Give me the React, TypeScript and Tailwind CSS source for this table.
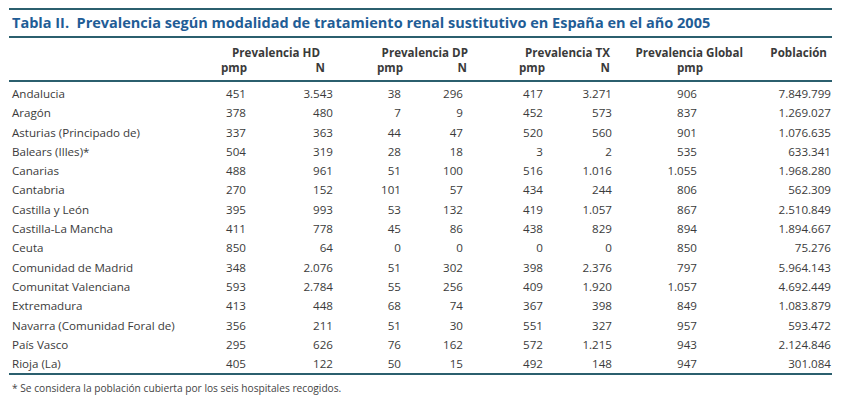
const rows: [string, string, string, string, string, string, string, string, string][] = [
  ['Andalucia', '451', '3.543', '38', '296', '417', '3.271', '906', '7.849.799'],
  ['Aragón', '378', '480', '7', '9', '452', '573', '837', '1.269.027'],
  ['Asturias (Principado de)', '337', '363', '44', '47', '520', '560', '901', '1.076.635'],
  ['Balears (Illes)*', '504', '319', '28', '18', '3', '2', '535', '633.341'],
  ['Canarias', '488', '961', '51', '100', '516', '1.016', '1.055', '1.968.280'],
  ['Cantabria', '270', '152', '101', '57', '434', '244', '806', '562.309'],
  ['Castilla y León', '395', '993', '53', '132', '419', '1.057', '867', '2.510.849'],
  ['Castilla-La Mancha', '411', '778', '45', '86', '438', '829', '894', '1.894.667'],
  ['Ceuta', '850', '64', '0', '0', '0', '0', '850', '75.276'],
  ['Comunidad de Madrid', '348', '2.076', '51', '302', '398', '2.376', '797', '5.964.143'],
  ['Comunitat Valenciana', '593', '2.784', '55', '256', '409', '1.920', '1.057', '4.692.449'],
  ['Extremadura', '413', '448', '68', '74', '367', '398', '849', '1.083.879'],
  ['Navarra (Comunidad Foral de)', '356', '211', '51', '30', '551', '327', '957', '593.472'],
  ['País Vasco', '295', '626', '76', '162', '572', '1.215', '943', '2.124.846'],
  ['Rioja (La)', '405', '122', '50', '15', '492', '148', '947', '301.084'],
];

const grid = 'grid grid-cols-[191px_46px_87px_68px_62px_80px_69px_85px_134px]';

export default function App() {
  return (
    <div className="h-[406px] w-[849px] bg-white pt-[8px] pl-[9px] font-['Open_Sans',sans-serif] text-[#333]">
      <div className="w-[823px]">
        <div className="border-t-2 border-[#2b5f6e]" />
        <div className="flex h-[26px] items-center pl-[3px] text-[14.5px] font-bold whitespace-pre text-[#1f5d96]">
          {'Tabla II.  Prevalencia según modalidad de tratamiento renal sustitutivo en España en el año 2005'}
        </div>
        <div className="border-t-2 border-[#2b5f6e]" />

        <div className={`${grid} pt-[8px] text-[11.6px] leading-[14.5px] font-bold whitespace-nowrap text-[#3a3a3a]`}>
          <div />
          <div className="col-span-2 pr-[13px] text-right">Prevalencia HD</div>
          <div className="col-span-2 -mr-[5px] text-right">Prevalencia DP</div>
          <div className="col-span-2 pr-[2px] text-right">Prevalencia TX</div>
          <div className="col-span-1 -mr-[46px] text-right">Prevalencia Global</div>
          <div className="pr-[4px] text-right">Población</div>

          <div />
          <div className="-mr-px text-right">pmp</div>
          <div className="pr-[8px] text-right">N</div>
          <div className="-mr-[2px] text-right">pmp</div>
          <div className="-mr-[4px] text-right">N</div>
          <div className="-mr-[2px] text-right">pmp</div>
          <div className="pr-[2px] text-right">N</div>
          <div className="-mr-[6px] text-right">pmp</div>
          <div />
        </div>

        <div className="mt-[5px] border-t-2 border-[#2b5f6e]" />

        <div className="pt-[2px] text-[11.6px] text-[#3b3b3b]">
          {rows.map((r) => (
            <div key={r[0]} className={`${grid} h-[19.3px] items-center`}>
              <div className="pl-[3px] whitespace-nowrap">{r[0]}</div>
              {r.slice(1).map((v, i) => (
                <div key={i} className="text-right">
                  {v}
                </div>
              ))}
            </div>
          ))}
        </div>

        <div className="border-t-2 border-[#2b5f6e]" />
        <div className="pt-[6px] pl-[3px] text-[10.2px] text-[#444]">
          * Se considera la población cubierta por los seis hospitales recogidos.
        </div>
      </div>
    </div>
  );
}
